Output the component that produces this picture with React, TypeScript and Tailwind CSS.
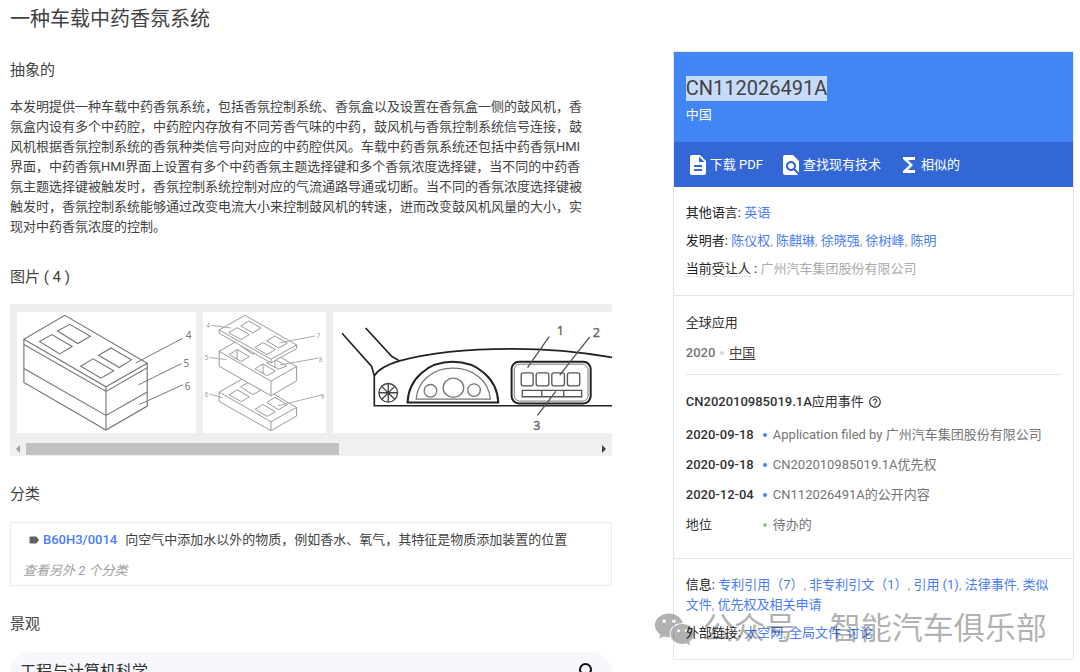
import { Fragment, type FC, type ReactNode } from "react";
import {
  MdDescription,
  MdFindInPage,
  MdFunctions,
  MdHelpOutline,
  MdLabel,
  MdSearch,
} from "react-icons/md";
import { FaWeixin } from "react-icons/fa";

const toolbarItems = [
  { label: "下载 PDF", Icon: MdDescription },
  { label: "查找现有技术", Icon: MdFindInPage },
  { label: "相似的", Icon: MdFunctions },
];

const abstractLines = [
  "本发明提供一种车载中药香氛系统，包括香氛控制系统、香氛盒以及设置在香氛盒一侧的鼓风机，香",
  "氛盒内设有多个中药腔，中药腔内存放有不同芳香气味的中药，鼓风机与香氛控制系统信号连接，鼓",
  "风机根据香氛控制系统的香氛种类信号向对应的中药腔供风。车载中药香氛系统还包括中药香氛HMI",
  "界面，中药香氛HMI界面上设置有多个中药香氛主题选择键和多个香氛浓度选择键，当不同的中药香",
  "氛主题选择键被触发时，香氛控制系统控制对应的气流通路导通或切断。当不同的香氛浓度选择键被",
  "触发时，香氛控制系统能够通过改变电流大小来控制鼓风机的转速，进而改变鼓风机风量的大小，实",
  "现对中药香氛浓度的控制。",
];

const inventors = ["陈仪权", "陈麒琳", "徐晓强", "徐树峰", "陈明"];

const infoLinks = [
  "专利引用（7）",
  "非专利引文（1）",
  "引用 (1)",
  "法律事件",
  "类似文件",
  "优先权及相关申请",
];

const externalLinks = ["太空网", "全局文件", "讨论"];

const events = [
  { date: "2020-09-18", text: "Application filed by 广州汽车集团股份有限公司" },
  { date: "2020-09-18", text: "CN202010985019.1A优先权" },
  { date: "2020-12-04", text: "CN112026491A的公开内容" },
  { date: "地位", text: "待办的", pending: true },
];

const LinkList: FC<{ items: string[] }> = ({ items }) => (
  <>
    {items.map((item, i) => (
      <Fragment key={item}>
        {i > 0 && ", "}
        <a href="#" className="text-[#4a7cf6]">
          {item}
        </a>
      </Fragment>
    ))}
  </>
);

const Field: FC<{ label: ReactNode; children: ReactNode }> = ({
  label,
  children,
}) => (
  <p className="text-[#aaaaaa]">
    <span className="text-[#222222]">{label}</span>
    {children}
  </p>
);

const SectionTitle: FC<{ children: ReactNode }> = ({ children }) => (
  <h2 className="text-[15px] leading-5 text-[#424242]">{children}</h2>
);

// ── Patent drawings ──

const BoxFigure: FC = () => (
  <svg
    viewBox="52 50 537 364"
    className="h-[121px] w-[179px] shrink-0 bg-white"
    fill="none"
    stroke="#777777"
    strokeWidth="3.5"
  >
    <path d="M72 132 195 60 443 204 319 275ZM72 132V262L319 405 443 333V204M319 275V405M72 148 319 289 443 218M72 220 319 361 443 291" />
    <path d="M173 107 210 87 272 123 234 145ZM119 139 156 118 217 154 180 176ZM297 180 334 158 395 194 359 217ZM243 213 280 191 342 227 304 249Z" />
    <path d="M409 203 550 129M417 269 546 205M420 328 550 269" strokeWidth="3" />
    <g fill="#777777" stroke="none" className="font-['Noto_Sans'] text-[30px]">
      <text x="559" y="130">4</text>
      <text x="552" y="216">5</text>
      <text x="556" y="285">6</text>
    </g>
  </svg>
);

// Drawn bottom-up so each layer hides the one beneath it
const ExplodedFigure: FC = () => (
  <svg
    viewBox="612 50 367 364"
    className="h-[121px] w-[123px] shrink-0 bg-white"
    fill="none"
    stroke="#999999"
    strokeWidth="3"
  >
    {/* bottom tray */}
    <path
      d="M659 291 737 247 892 337V363L815 407 659 319Z"
      fill="white"
    />
    <path d="M659 291 815 380 892 337M815 380V407" />
    <path d="M724 275 748 261 785 285 760 299ZM689 299 713 284 750 305 726 320ZM802 322 827 307 864 328 838 344ZM767 343 791 328 828 350 804 364Z" />
    {/* middle tray */}
    <path
      d="M659 168 737 124 892 214V257L815 302 659 213Z"
      fill="white"
    />
    <path d="M659 168 815 258 892 214M815 258V302" />
    <path d="M724 152 748 139 785 162 760 177ZM689 178 713 163 750 184 726 199ZM713 163V192M767 221 791 206 828 228 804 242ZM791 206V235M802 203 824 191 862 212 838 222ZM827 192V218" />
    {/* lid */}
    <path
      d="M659 104 737 60 892 149V160L815 203 659 114Z"
      fill="white"
    />
    <path d="M659 104 815 192 892 149M815 192V203" />
    <path d="M724 92 748 77 785 98 760 113ZM688 112 713 97 750 118 725 133ZM802 137 827 122 864 144 838 158ZM767 157 791 142 828 163 803 178Z" />
    <path
      d="M634 90 694 98M840 143 948 122M630 187 680 193M842 209 957 189M630 297 670 308M836 332 970 299"
      stroke="#b3a5b5"
    />
    <g fill="#999999" stroke="none" className="font-['Noto_Sans'] text-[19px]">
      <text x="620" y="97">4</text>
      <text x="952" y="129">7</text>
      <text x="616" y="194">5</text>
      <text x="959" y="199">8</text>
      <text x="616" y="305">6</text>
      <text x="965" y="312">9</text>
    </g>
  </svg>
);

const DashboardFigure: FC = () => (
  <svg
    viewBox="40 50 891 364"
    className="h-[121px] w-[297px] shrink-0 bg-white"
    fill="none"
    stroke="#222222"
    strokeWidth="5"
  >
    <path d="M66 114 155 214 163 242V332H931M137 98 216 184 239 197M163 242C175 222 208 206 239 197C340 170 450 161 580 161C700 161 800 170 931 196" />
    <path d="M263 322C266 250 325 200 399 200S533 250 536 322Z" strokeWidth="6" />
    <g stroke="#777777" strokeWidth="4">
      <path d="M289 312C293 256 340 219 400 219S508 256 512 312Z" />
      <ellipse cx="401" cy="278" rx="31" ry="29" />
      <circle cx="332" cy="287" r="19" />
      <circle cx="463" cy="285" r="19" />
    </g>
    <g stroke="#444444" strokeWidth="4">
      <circle cx="205" cy="293" r="28" />
      <path d="M205 265V321M177 293H233M185 273 225 313M225 273 185 313" />
      <circle cx="205" cy="293" r="4" fill="#333333" />
    </g>
    <rect x="576" y="200" width="238" height="125" rx="22" strokeWidth="6" />
    <rect
      x="584"
      y="207"
      width="222"
      height="111"
      rx="16"
      stroke="#777777"
      strokeWidth="3"
    />
    <g stroke="#555555" strokeWidth="4">
      <rect x="605" y="233" width="36" height="39" rx="6" />
      <rect x="650" y="233" width="38" height="39" rx="6" />
      <rect x="697" y="233" width="38" height="39" rx="6" />
      <rect x="744" y="233" width="37" height="39" rx="6" />
      <path d="M608 286H787V305H608ZM667 286V305M733 286V305" />
      <path d="M689 124 624 217M811 125 721 240M709 289 654 361" />
    </g>
    <g
      fill="#666666"
      stroke="#666666"
      strokeWidth="1"
      className="font-['Noto_Sans'] text-[38px]"
    >
      <text x="712" y="119">1</text>
      <text x="820" y="126">2</text>
      <text x="641" y="404">3</text>
    </g>
  </svg>
);

const FigureStrip: FC = () => (
  <div className="mt-[17px] overflow-hidden bg-[#eeeeee]">
    <div className="flex gap-[7px] overflow-hidden px-[7px] py-2">
      <BoxFigure />
      <ExplodedFigure />
      <DashboardFigure />
    </div>
    <div className="flex h-[15px] items-center bg-[#f0f0f0]">
      <button
        type="button"
        aria-label="向左滚动"
        className="flex w-4 justify-center"
      >
        <svg viewBox="0 0 4 8" className="h-2 w-1" fill="#a0a0a0">
          <path d="M4 0V8L0 4Z" />
        </svg>
      </button>
      <div className="flex-1">
        <div className="h-3 w-[55%] bg-[#c1c1c1]" />
      </div>
      <button
        type="button"
        aria-label="向右滚动"
        className="flex w-4 justify-center"
      >
        <svg viewBox="0 0 4 8" className="h-2 w-1" fill="#404040">
          <path d="M0 0V8L4 4Z" />
        </svg>
      </button>
    </div>
  </div>
);

// ── Right-hand summary card ──

const SummaryCard: FC = () => (
  <aside className="relative mt-[51px] min-w-0 self-start border border-[#e8e8e8] leading-5">
    <header className="bg-[#4285f4] px-3 pt-6 pb-[17px] text-white">
      <h2 className="text-xl leading-[25px]">
        <span className="inline-block bg-[#c6dafc] text-[#424242]">
          CN112026491A
        </span>
      </h2>
      <p className="mt-1">中国</p>
    </header>
    <nav className="flex h-[45px] items-center gap-4 bg-[#3367d6] px-3 text-white">
      {toolbarItems.map(({ label, Icon }) => (
        <a key={label} href="#" className="flex items-center">
          <Icon size={24} />
          {label}
        </a>
      ))}
    </nav>

    <section className="flex flex-col gap-2 border-b border-[#e4e4e4] px-3 py-4">
      <Field label="其他语言: ">
        <LinkList items={["英语"]} />
      </Field>
      <Field label="发明者: ">
        <LinkList items={inventors} />
      </Field>
      <Field
        label={
          <>
            <span className="border-b border-dotted border-[#cccccc]">
              当前受让人
            </span>{" "}
            :{" "}
          </>
        }
      >
        广州汽车集团股份有限公司
      </Field>
    </section>

    <section className="border-b border-[#e4e4e4] px-3 pt-[17px] pb-[23px]">
      <h3 className="text-[#333333]">全球应用</h3>
      <p className="mt-[10px] flex items-center gap-1 border-b border-[#e4e4e4] pb-[11px] text-[#757575]">
        <span className="font-medium">2020</span>
        <span className="mx-px size-1 rounded-full bg-[#d5d5d5]" />
        <a href="#" className="text-[#424242] underline underline-offset-2">
          中国
        </a>
      </p>
      <h3 className="mt-[17px] flex items-center gap-1 text-[#333333]">
        <span>
          <span className="font-medium">CN202010985019.1A</span>应用事件
        </span>
        <MdHelpOutline size={14} />
      </h3>
      <ul className="mt-[13px] flex flex-col gap-[10px]">
        {events.map(({ date, text, pending }) => (
          <li key={text} className="flex items-center text-[#757575]">
            <span
              className={
                pending
                  ? "w-[77px] text-[#333333]"
                  : "w-[77px] font-medium text-[#333333]"
              }
            >
              {date}
            </span>
            <span
              className={
                pending
                  ? "mr-[6px] size-1 rounded-full bg-[#81c995]"
                  : "mr-[6px] size-1 rounded-full bg-[#4285f4]"
              }
            />
            <span>{text}</span>
          </li>
        ))}
      </ul>
    </section>

    <section className="flex flex-col gap-2 px-3 py-4">
      <div className="pr-2">
        <Field label="信息: ">
          <LinkList items={infoLinks} />
        </Field>
      </div>
      <Field label="外部链接: ">
        <LinkList items={externalLinks} />
      </Field>
    </section>

    {/* Account watermark across the card's lower edge */}
    <div className="pointer-events-none absolute bottom-2 -left-5 flex items-center text-[31px] leading-[44px] whitespace-nowrap text-black opacity-30">
      <FaWeixin size={41} />
      <span className="ml-2">公众号</span>
      <span className="ml-[34px]">智能汽车俱乐部</span>
    </div>
  </aside>
);

export default function App() {
  return (
    <div
      lang="zh-CN"
      className="grid h-screen grid-cols-[3fr_2fr] gap-[61px] overflow-hidden bg-white pr-[6px] pl-[10px] font-[Roboto,'Noto_Sans_CJK_SC',sans-serif] text-[13px]"
    >
      <main className="min-w-0">
        <h1 className="pt-[5px] text-xl leading-7 text-[#424242]">
          一种车载中药香氛系统
        </h1>

        <div className="mt-[27px]">
          <SectionTitle>抽象的</SectionTitle>
          <p className="mt-[17px] leading-5 whitespace-nowrap text-[#424242]">
            {abstractLines.map((line) => (
              <Fragment key={line}>
                {line}
                <br />
              </Fragment>
            ))}
          </p>
        </div>

        <div className="mt-[30px]">
          <SectionTitle>图片 ( 4 )</SectionTitle>
          <FigureStrip />
        </div>

        <div className="mt-7">
          <SectionTitle>分类</SectionTitle>
          <div className="mt-[18px] border border-[#ebebeb] px-3 pt-[7px] pb-1 leading-5">
            <p className="flex items-center pl-[5px] text-[#424242]">
              <MdLabel size={12} className="mr-[3px] text-[#5f6368]" />
              <a href="#" className="mr-2 font-medium text-[#4a7cf6]">
                B60H3/0014
              </a>
              向空气中添加水以外的物质，例如香水、氧气，其特征是物质添加装置的位置
            </p>
            <button
              type="button"
              className="mt-[11px] block text-[#a0a0a0] italic"
            >
              查看另外 2 个分类
            </button>
          </div>
        </div>

        <div className="mt-7">
          <SectionTitle>景观</SectionTitle>
          <div className="mt-[18px] flex h-10 items-center justify-between rounded-[20px] bg-[#f6f8fb] pr-3 pl-[10px] text-base text-[#333333]">
            工程与计算机科学
            <button type="button" aria-label="搜索" className="text-[#111111]">
              <MdSearch size={24} />
            </button>
          </div>
        </div>
      </main>

      <SummaryCard />
    </div>
  );
}
